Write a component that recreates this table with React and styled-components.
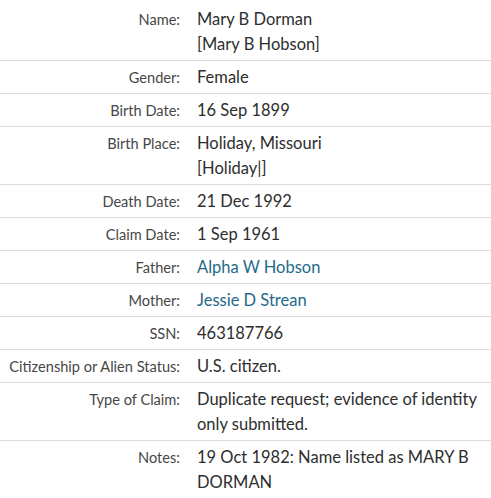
import React from "react";
import styled, { createGlobalStyle } from "styled-components";

const Global = createGlobalStyle`
  html, body { margin: 0; padding: 0; background: #fff; }
  body { font-family: Lato, "Open Sans", sans-serif; }
`;

const Table = styled.table`
  width: 491px;
  border-collapse: collapse;
  margin-top: 3px;
`;

const Row = styled.tr`
  border-top: ${(p) => (p.$first ? "none" : "1px solid #dcdcdc")};
`;

const Label = styled.th`
  width: 180px;
  padding: 4px 0 3px 0;
  text-align: right;
  vertical-align: top;
  font-weight: normal;
  font-size: 14.6px;
  line-height: 25px;
  color: #474747;
  white-space: nowrap;
`;

const Value = styled.td`
  padding: 4px 6px 3px 17px;
  vertical-align: top;
  font-size: 16.5px;
  line-height: 25px;
  color: #2e2e2e;
`;

const Link = styled.a`
  color: #1f6a8a;
  text-decoration: none;
`;

const rows = [
  ["Name:", <>Mary B Dorman<br />[Mary B Hobson]</>],
  ["Gender:", "Female"],
  ["Birth Date:", "16 Sep 1899"],
  ["Birth Place:", <>Holiday, Missouri<br />[Holiday|]</>],
  ["Death Date:", "21 Dec 1992"],
  ["Claim Date:", "1 Sep 1961"],
  ["Father:", <Link href="#">Alpha W Hobson</Link>],
  ["Mother:", <Link href="#">Jessie D Strean</Link>],
  ["SSN:", "463187766"],
  ["Citizenship or Alien Status:", "U.S. citizen."],
  ["Type of Claim:", "Duplicate request; evidence of identity only submitted."],
  ["Notes:", "19 Oct 1982: Name listed as MARY B DORMAN"],
];

export default function App() {
  return (
    <>
      <Global />
      <Table>
        <tbody>
          {rows.map(([l, v], i) => (
            <Row key={l} $first={i === 0}>
              <Label>{l}</Label>
              <Value>{v}</Value>
            </Row>
          ))}
        </tbody>
      </Table>
    </>
  );
}
